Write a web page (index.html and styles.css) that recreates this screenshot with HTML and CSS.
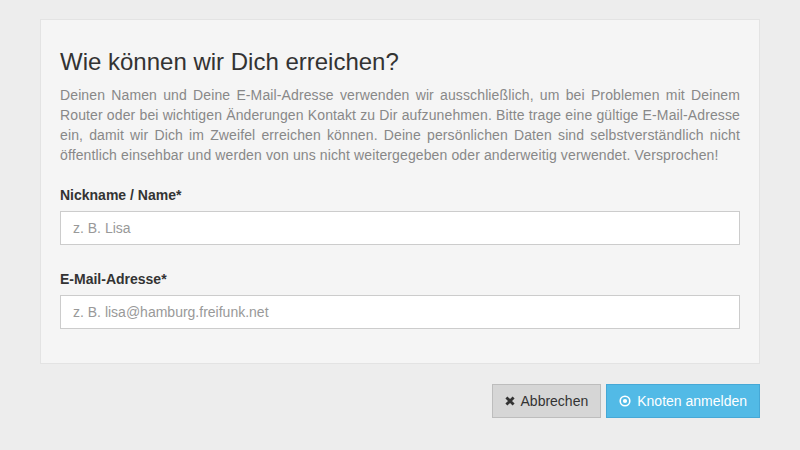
FILE: index.html
```html
<!DOCTYPE html>
<html lang="de">
<head>
<meta charset="utf-8">
<title>Knoten anmelden</title>
<link rel="stylesheet" href="styles.css">
</head>
<body>
<div class="page">
  <div class="well">
    <h3 class="title">Wie können wir Dich erreichen?</h3>
    <p class="help">Deinen Namen und Deine E-Mail-Adresse verwenden wir ausschließlich, um bei Problemen mit Deinem Router oder bei wichtigen Änderungen Kontakt zu Dir aufzunehmen. Bitte trage eine gültige E-Mail-Adresse ein, damit wir Dich im Zweifel erreichen können. Deine persönlichen Daten sind selbstverständlich nicht öffentlich einsehbar und werden von uns nicht weitergegeben oder anderweitig verwendet. Versprochen!</p>
    <div class="group">
      <label class="label" for="nick">Nickname / Name*</label>
      <input class="input" id="nick" type="text" placeholder="z. B. Lisa">
    </div>
    <div class="group">
      <label class="label" for="mail">E-Mail-Adresse*</label>
      <input class="input" id="mail" type="text" placeholder="z. B. lisa@hamburg.freifunk.net">
    </div>
  </div>
  <div class="actions">
    <button class="btn btn-default" type="button">
      <svg class="icon" viewBox="0 0 10 10" width="10" height="10"><path d="M1.4 1.4 L8.6 8.6 M8.6 1.4 L1.4 8.6" stroke="#333" stroke-width="2.8" stroke-linecap="butt" fill="none"/></svg>Abbrechen
    </button>
    <button class="btn btn-info" type="button">
      <svg class="icon" viewBox="0 0 12 12" width="12" height="12"><circle cx="6" cy="6" r="4.8" stroke="#fff" stroke-width="1.6" fill="none"/><circle cx="6" cy="6" r="2.1" fill="#fff"/></svg>Knoten anmelden
    </button>
  </div>
</div>
</body>
</html>
```

FILE: styles.css
```css
html, body {
  margin: 0;
  padding: 0;
  background: #ededed;
  font-family: "Liberation Sans", Arial, sans-serif;
  font-size: 14px;
  color: #333;
}

.page {
  width: 720px;
  margin: 0 auto;
  padding-top: 19px;
}

.well {
  background: #f5f5f5;
  border: 1px solid #e3e3e3;
  padding: 19px 19px 19px;
}

.title {
  margin: 10px 0 10px;
  font-size: 24px;
  font-weight: normal;
  line-height: 1.1;
  color: #333;
}

.help {
  margin: 0 0 20px;
  font-size: 14px;
  letter-spacing: 0.12px;
  line-height: 20px;
  color: #888;
  text-align: justify;
}

.group {
  margin-bottom: 24px;
}

.group:last-child {
  margin-bottom: 15px;
}

.label {
  display: block;
  font-weight: bold;
  margin-bottom: 6px;
  line-height: 20px;
}

.input {
  display: block;
  box-sizing: border-box;
  width: 100%;
  height: 34px;
  padding: 6px 12px;
  font-family: inherit;
  font-size: 14px;
  color: #555;
  background: #fff;
  border: 1px solid #ccc;
  border-radius: 0;
  outline: none;
}

.input::placeholder {
  color: #999;
}

.actions {
  display: flex;
  justify-content: flex-end;
  gap: 5px;
  margin-top: 20px;
}

.btn {
  display: inline-flex;
  align-items: center;
  gap: 6px;
  height: 34px;
  padding: 6px 12px;
  font-family: inherit;
  font-size: 14px;
  line-height: 20px;
  border: 1px solid transparent;
  border-radius: 0;
  cursor: pointer;
}

.btn-default {
  background: #d6d6d6;
  border-color: #bdbdbd;
  color: #333;
}

.btn-info {
  background: #52bae6;
  border-color: #46a8d6;
  color: #fff;
}

.icon {
  display: block;
}
```
